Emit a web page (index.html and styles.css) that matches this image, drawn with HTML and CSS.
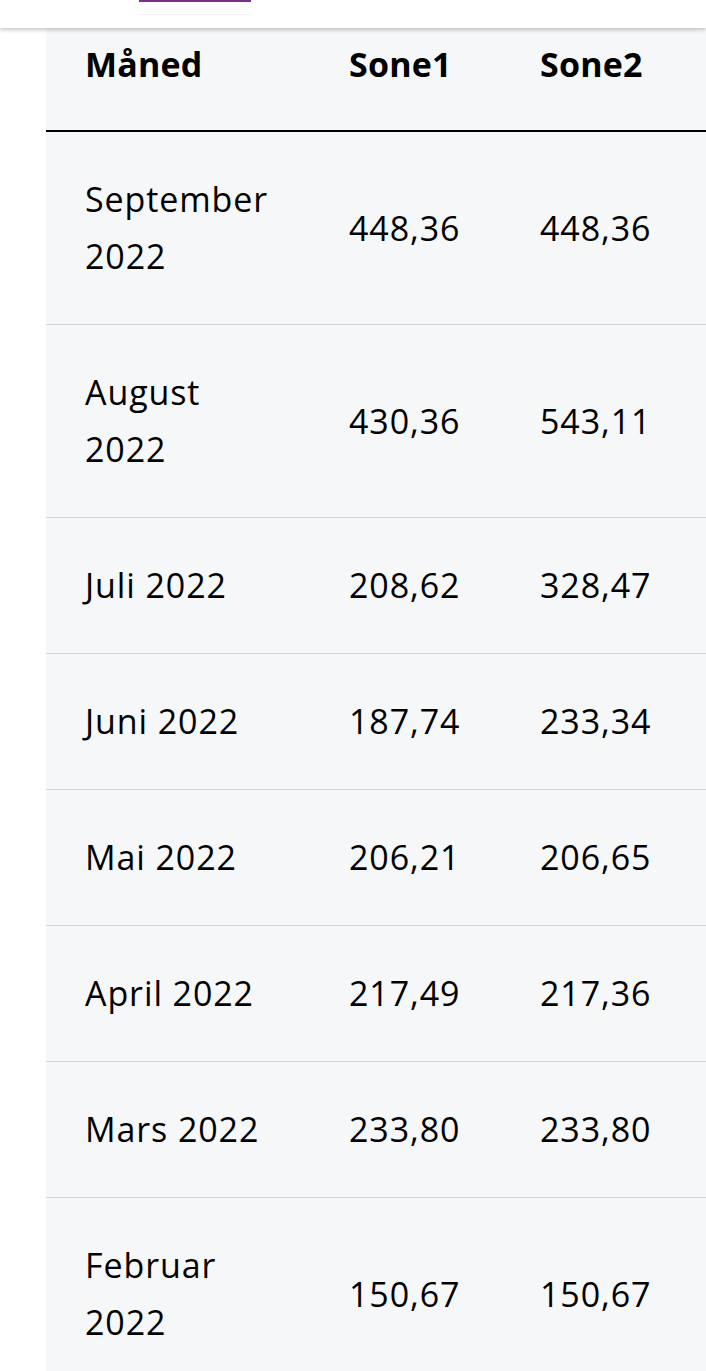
FILE: index.html
```html
<!DOCTYPE html>
<html lang="no">
<head>
<meta charset="utf-8">
<title>Priser</title>
<link rel="stylesheet" href="styles.css">
</head>
<body>
<header class="topbar">
  <span class="tab-indicator"></span>
</header>
<main class="content">
  <div class="table-wrap">
    <table class="price-table">
      <colgroup>
        <col class="col-month">
        <col class="col-zone">
        <col class="col-zone-last">
      </colgroup>
      <thead>
        <tr><th>Måned</th><th>Sone1</th><th>Sone2</th></tr>
      </thead>
      <tbody>
        <tr><td>September 2022</td><td>448,36</td><td>448,36</td></tr>
        <tr><td>August 2022</td><td>430,36</td><td>543,11</td></tr>
        <tr><td>Juli 2022</td><td>208,62</td><td>328,47</td></tr>
        <tr><td>Juni 2022</td><td>187,74</td><td>233,34</td></tr>
        <tr><td>Mai 2022</td><td>206,21</td><td>206,65</td></tr>
        <tr><td>April 2022</td><td>217,49</td><td>217,36</td></tr>
        <tr><td>Mars 2022</td><td>233,80</td><td>233,80</td></tr>
        <tr><td>Februar 2022</td><td>150,67</td><td>150,67</td></tr>
      </tbody>
    </table>
  </div>
</main>
</body>
</html>
```

FILE: styles.css
```css
html, body {
  margin: 0;
  padding: 0;
  background: #ffffff;
}

body {
  font-family: "Open Sans", "Noto Sans", sans-serif;
  color: #000000;
  overflow: hidden;
}

.topbar {
  position: sticky;
  top: 0;
  z-index: 2;
  height: 28px;
  background: #ffffff;
  box-shadow: 0 2px 4px rgba(0, 0, 0, 0.22);
  display: flex;
  align-items: flex-start;
  padding-left: 139px;
  box-sizing: border-box;
}

.tab-indicator {
  display: block;
  width: 112px;
  height: 12px;
  border-top: 2px solid #7b2f8f;
  border-bottom: 1px solid #f3f3f5;
}

.content {
  padding-left: 46px;
}

.table-wrap {
  background: #f6f7f9;
  overflow: hidden;
}

.price-table {
  width: 100%;
  table-layout: fixed;
  border-collapse: collapse;
  font-size: 34px;
  line-height: 57px;
}

.col-month { width: 264px; }
.col-zone { width: 191px; }

.price-table th,
.price-table td {
  text-align: left;
  vertical-align: middle;
  padding: 39px 39px;
}

.price-table th {
  font-weight: 700;
  letter-spacing: 0.2px;
  padding-top: 8px;
  padding-bottom: 37px;
  border-bottom: 2px solid #000000;
}

.price-table td {
  font-weight: 400;
  letter-spacing: 0.9px;
  border-bottom: 1px solid #d0d3d8;
}
```
